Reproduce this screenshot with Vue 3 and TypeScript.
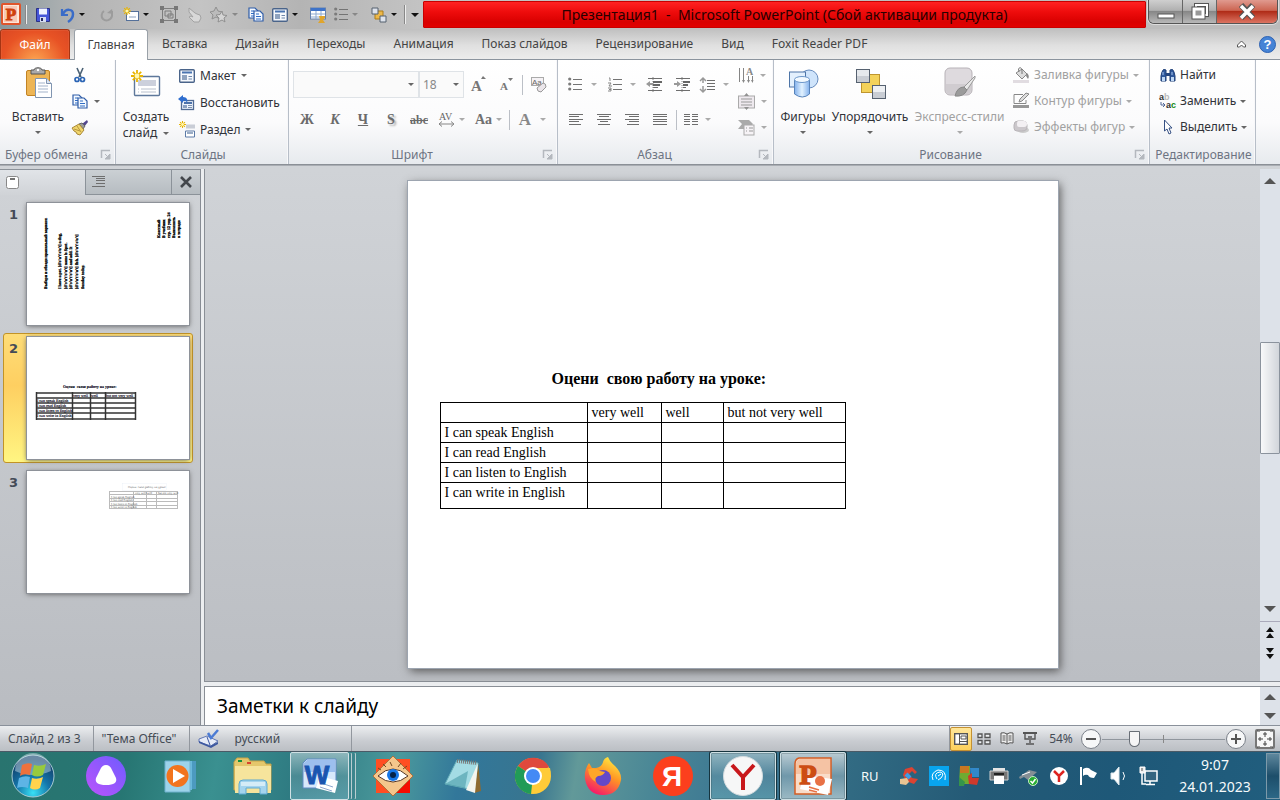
<script setup lang="ts">
import { h, ref, type FunctionalComponent } from 'vue'

interface Glyph { w: number; h: number; body: string }
interface ToolItem { icon: string; label: string; size?: string; menu?: boolean; off?: boolean }

const sheet = '<path d="M1 1h6l3 3v7H1z" fill="#f4f9ff" stroke="#2f5da8" stroke-width="1.200"/><path d="M3 4h3M3 6.500h5M3 9h5" stroke="#2f6cc4"/>'
const lines = (rows: number[][]) => rows.map(([x1, x2, y]) => `<path d="M${x1} ${y}.5H${x2}" stroke="#6e6e6e"/>`).join('')
const burst = '<path d="M5 0v10M0 5h10M1.500 1.500l7 7M8.500 1.500l-7 7" stroke="#e8b400" stroke-width="1.500"/><circle cx="5" cy="5" r="2" fill="#fff8b0"/>'

const icons: Record<string, Glyph> = {
  ppt: { w: 20, h: 22, body: '<rect x="1" y="1" width="18" height="20" rx="1" fill="#fde6da" stroke="#e0552c" stroke-width="2"/><rect x="3" y="3" width="13" height="16" fill="#f9c9b5"/><text x="10" y="17" text-anchor="middle" font-family="Liberation Serif, serif" font-weight="bold" font-size="17" fill="#d0400c" stroke="#d0400c">P</text>' },
  save: { w: 16, h: 16, body: '<path d="M1.500 1.500h13v13h-13z" fill="#4556d8" stroke="#2a3288"/><path d="M4 1.500h8v6H4z" fill="#eef3ff"/><path d="M5 10h6v5H5z" fill="#d5dcf2"/><path d="M6 11h2v3H6z" fill="#252a60"/>' },
  undo: { w: 14, h: 16, body: '<path d="M1 2v6h6" fill="none" stroke="#3a6cc8" stroke-width="2.200"/><path d="M2 7c3-6 10-5 10 0 0 3-2 6-5 8" fill="none" stroke="#3a6cc8" stroke-width="2.500"/>' },
  redo: { w: 14, h: 14, body: '<path d="M4 3C1 5 1 9 3 11c3 3 8 1 9-3V3" fill="none" stroke="#9c9c9c" stroke-width="2"/><path d="M7 5l5-4 1 5z" fill="#9c9c9c"/>' },
  newSmall: { w: 16, h: 15, body: `<rect x="3.500" y="4.500" width="12" height="9" fill="#fff" stroke="#54709a"/><path d="M6 10h7" stroke="#8aa0bd"/><g transform="scale(.8)">${burst}</g>` },
  group: { w: 18, h: 17, body: '<path d="M2.500 2.500h13v12h-13zM5 5h6v5H5zM8 8h5v4H8z" fill="none" stroke="#7d7d7d"/><path d="M0 0h4v4H0zM14 0h4v4h-4zM0 13h4v4H0zM14 13h4v4h-4z" fill="#777"/>' },
  hand: { w: 14, h: 16, body: '<path d="M2 1l6 5 2 1 3 1 1 3-2 4H7l-5-5 2-1 2 1L2 5z" fill="#d8d8d8" stroke="#a2a2a2"/>' },
  star: { w: 18, h: 17, body: '<path d="M6 1l2 4 4 1-3 3 1 4-4-2-4 2 1-4-3-3 4-1z" fill="#bbb" stroke="#909090"/><path d="M12 5l1 4 4 .5-3 2.500 1 4-3-2-4 2 1-4-3-3 4-.5z" fill="#d5d5d5" stroke="#909090"/>' },
  copy: { w: 16, h: 15, body: `${sheet}<g transform="translate(5 3)">${sheet}</g>` },
  layout: { w: 16, h: 14, body: '<rect x=".7" y=".7" width="14.600" height="12.600" rx="1" fill="#f6f9fd" stroke="#4a648a" stroke-width="1.400"/><path d="M3 3.500h10" stroke="#4a74b0" stroke-width="2"/><path d="M3 6h5v5H3z" fill="#8fa3bf"/><path d="M9.500 7.500H13M9.500 10H13" stroke="#6d86aa"/>' },
  grid: { w: 16, h: 16, body: '<rect x=".5" y="1" width="15" height="11" fill="#fff" stroke="#6581ad"/><path d="M1 1h14v3H1z" fill="#3e73c9"/><path d="M1 7h14M1 10h14M6 4v8M11 4v8" stroke="#8da9d0"/><path d="M9 9h6v2l-2 2 2 3H8l2-3z" fill="#e0a52c"/>' },
  bullets: { w: 14, h: 15, body: '<circle cx="1.700" cy="2" r="1.600" fill="#7b7b7b"/><circle cx="1.700" cy="7" r="1.600" fill="#7b7b7b"/><circle cx="1.700" cy="12" r="1.600" fill="#7b7b7b"/><path d="M5 2.500h9M5 7.500h9M5 12.500h9" stroke="#747474"/>' },
  numbers: { w: 15, h: 16, body: '<path d="M1 1h1v3M0 6h3l-2 3h3M0 11h3v3H0M1 12.500h2" fill="none" stroke="#858585"/><path d="M5 2.500h9M5 7.500h9M5 12.500h9" stroke="#747474"/>' },
  arrangeSmall: { w: 16, h: 16, body: '<path d="M4 4h8v8H4z" fill="#edb848" stroke="#ad7c18"/><path d="M1 1h6v6H1zM9 9h6v6H9z" fill="#dee3ec" stroke="#55606f"/>' },
  paste: { w: 29, h: 32, body: '<rect x="2.500" y="3.500" width="23" height="25" rx="1.500" fill="#edb555" stroke="#c28324"/><path d="M7 3h3c0-3 8-3 8 0h3v4H7z" fill="#aaa" stroke="#555"/><circle cx="14" cy="3" r="1.200" fill="#fff"/><path d="M11.500 11.500h11l5 5v14h-16z" fill="#fff" stroke="#8095b1"/><path d="M22.500 11.500v5h5" fill="#dce5f3" stroke="#8095b1"/><path d="M14 16h7M14 19h10M14 22h10M14 25h10" stroke="#a3b3ca"/>' },
  cut: { w: 12, h: 15, body: '<path d="M3 0l4 9M9 0L5 9" stroke="#4a6074" stroke-width="1.600"/><circle cx="3" cy="11.500" r="2" fill="none" stroke="#2c65b5" stroke-width="1.700"/><circle cx="8.500" cy="11.500" r="2" fill="none" stroke="#2c65b5" stroke-width="1.700"/>' },
  brush: { w: 16, h: 15, body: '<path d="M15 0l-5 4 2 3 4-5z" fill="#53478d"/><path d="M7 4l3-1 3 3-2 3z" fill="#999" stroke="#666"/><path d="M0 8l7-4 5 6-4 5-3-1-1-2-2-1z" fill="#f0d56c" stroke="#a98735"/><path d="M2 9l6 2M5 6l4 6" stroke="#b7963e"/>' },
  newSlide: { w: 32, h: 30, body: `<rect x="4.500" y="8.500" width="25" height="19" rx="1" fill="#fff" stroke="#5e789b" stroke-width="1.400"/><path d="M8 12h18v6H8z" fill="#ccd0dc"/><path d="M8 21h1M11 21h15M8 24h1M11 24h15" stroke="#b8c0cd"/><g transform="translate(1 2) scale(1.200)">${burst}</g>` },
  reset: { w: 17, h: 16, body: '<rect x="3.500" y="5.500" width="12" height="9" fill="#eef4fc" stroke="#516b94" stroke-width="1.300"/><path d="M6 8h8" stroke="#4d72aa" stroke-width="2"/><path d="M5 10h4v3H5z" fill="#8ba1c2"/><path d="M10 10.500h4M10 12.500h4" stroke="#7d91ae"/><path d="M0 4l5-4v2c4 0 5 3 4 6-1-3-2-3-4-2v2z" fill="#2f6ecf"/>' },
  section: { w: 16, h: 17, body: `<path d="M7 3.500h9v4H7z" fill="#c9cdd6"/><path d="M6.500 10h9v6h-9z" fill="#fff" stroke="#5c7ba7"/><path d="M8 12h6" stroke="#9aacc5" stroke-width="2"/><g transform="scale(.7)">${burst}</g>` },
  bigA: { w: 15, h: 17, body: '<text x="0" y="15" font-family="Liberation Serif, serif" font-weight="bold" font-size="15" fill="#777">A</text><path d="M10 3l2-3 3 3z" fill="#777"/>' },
  smallA: { w: 13, h: 16, body: '<text x="0" y="13" font-family="Liberation Serif, serif" font-weight="bold" font-size="11" fill="#777">A</text><path d="M8 1h5l-2.500 3z" fill="#777"/>' },
  clear: { w: 17, h: 17, body: '<rect x=".5" y="1.500" width="12" height="8" fill="#f5f2f5" stroke="#aaa"/><text x="1" y="9" font-family="Liberation Sans, sans-serif" font-size="8" fill="#666">Aa</text><path d="M6 12l6-5q3 0 3 4l-5 5q-4 0-4-4z" fill="#ebe6eb" stroke="#999"/>' },
  spacingAV: { w: 17, h: 15, body: '<text x="1" y="8" font-family="Liberation Serif, serif" font-size="10" fill="#666">AV</text><path d="M1 12h14M4 9.500L1 12l3 2.500M13 9.500l3 2.500-3 2.500" fill="none" stroke="#858585"/>' },
  outdent: { w: 17, h: 15, body: `${lines([[2, 16, 1], [7, 16, 4], [7, 14, 7], [7, 12, 10], [2, 16, 13]])}<path d="M7 0v15" stroke="#888" stroke-dasharray="1 1"/><path d="M0 7l4-3v2h3v2H4v2z" fill="#999"/><path d="M7 5h9M7 8h7" stroke="#666" stroke-width="2"/>` },
  indent: { w: 17, h: 15, body: `${lines([[2, 16, 1], [9, 16, 4], [9, 14, 7], [9, 12, 10], [2, 16, 13]])}<path d="M8 0v15" stroke="#888" stroke-dasharray="1 1"/><path d="M7 7L3 4v2H0v2h3v2z" fill="#999"/><path d="M9 5h7M9 8h5" stroke="#666" stroke-width="2"/>` },
  lineGap: { w: 16, h: 16, body: `${lines([[7, 15, 3], [7, 15, 6], [7, 15, 9], [7, 15, 12]])}<path d="M3 1v5M3 9v6M0 4l3-3 3 3M0 12l3 3 3-3" fill="none" stroke="#999" stroke-width="1.500"/>` },
  left: { w: 14, h: 12, body: lines([[0, 14, 0], [0, 10, 2], [0, 14, 5], [0, 10, 7], [0, 12, 10]]) },
  center: { w: 14, h: 12, body: lines([[0, 14, 0], [2, 12, 2], [0, 14, 5], [3, 11, 7], [1, 13, 10]]) },
  right: { w: 14, h: 12, body: lines([[0, 14, 0], [4, 14, 2], [0, 14, 5], [4, 14, 7], [2, 14, 10]]) },
  justify: { w: 14, h: 12, body: lines([[0, 14, 0], [0, 14, 2], [0, 14, 5], [0, 14, 7], [0, 14, 10]]) },
  columns: { w: 14, h: 12, body: lines([[0, 6, 0], [0, 6, 2], [0, 6, 5], [0, 6, 7], [0, 6, 10], [8, 14, 0], [8, 14, 2], [8, 14, 5], [8, 14, 7], [8, 14, 10]]) },
  direction: { w: 16, h: 17, body: '<path d="M1.500 1v14M5.500 1v14M10.500 9v6M14.500 9v6" stroke="#858585"/><path d="M4 13l1.500 3L7 13M9 13l1.500 3 1.500-3M13 13l1.500 3 1-3" fill="#888"/><text x="8" y="8" font-family="Liberation Serif, serif" font-size="10" font-weight="bold" fill="#888">A</text>' },
  valign: { w: 17, h: 17, body: '<rect x=".5" y="3" width="16" height="12" fill="#eee9ee" stroke="#aaa"/><path d="M3 6h11M3 9h11M3 12h11" stroke="#999"/><path d="M6 3l2.500-3L11 3zM6 14l2.500 3 2.500-3z" fill="#929292"/>' },
  smart: { w: 17, h: 16, body: '<path d="M0 1h11l4 4-4 5H0l4-5z" fill="#aaa"/><rect x="6" y="6" width="10" height="10" fill="#f6f3f6" stroke="#aaa"/><path d="M8 9h1M11 9h4M8 12h1M11 12h4" stroke="#999"/>' },
  shapes: { w: 31, h: 30, body: '<defs><linearGradient id="cyl"><stop stop-color="#83b1ec"/><stop offset=".5" stop-color="#e2f2ff"/><stop offset="1" stop-color="#83b1ec"/></linearGradient></defs><circle cx="21" cy="11" r="9" fill="#cfe4fb" stroke="#668bbd"/><rect x="1.500" y="4" width="16" height="15" fill="#e3f0fd" stroke="#4e75a7"/><path d="M6.500 12v14q8 6 15 0V12" fill="url(#cyl)" stroke="#5884bb"/><ellipse cx="14" cy="11.500" rx="7.500" ry="3" fill="#f2f9ff" stroke="#6b96c9"/>' },
  arrange: { w: 31, h: 31, body: '<rect x="6.500" y="6.500" width="18" height="18" fill="#f4d25a" stroke="#bf952e"/><rect x="1.500" y="1.500" width="13" height="13" fill="#c9cdd4" stroke="#566170"/><path d="M2 2h12v6H2z" fill="#e6e9ed"/><rect x="17.500" y="17.500" width="13" height="13" fill="#c9cdd4" stroke="#566170"/><path d="M18 18h12v6H18z" fill="#eef0f3"/>' },
  express: { w: 32, h: 32, body: '<rect x="1" y="1" width="27" height="27" rx="5" fill="#dedade" stroke="#b7b2b7"/><path d="M2 17h25v6q0 4-4 4H6q-4 0-4-4z" fill="#d0ccd0"/><path d="M31 9L20 20l3 3 8-12z" fill="#e8e8e8" stroke="#999"/><path d="M20 20q-7 0-9 9 9 1 12-6z" fill="#9b9b9b" stroke="#888"/>' },
  fill: { w: 17, h: 17, body: '<path d="M3 6l6-4 5 5-5 5z" fill="#ddd" stroke="#888"/><path d="M6 5c-2-5 3-6 3-1v3" fill="none" stroke="#777"/><path d="M14 6q3 3 1 6l-2-3z" fill="#888"/><path d="M0 13h16v3H0z" fill="#e1dce1"/>' },
  outline: { w: 17, h: 16, body: '<path d="M10 1.500H1v9h12V7" fill="none" stroke="#888"/><path d="M6 9l1-3 6-6 3 1-7 7z" fill="#ddd" stroke="#888"/><path d="M0 12h16v3H0z" fill="#979797"/>' },
  effects: { w: 17, h: 15, body: '<ellipse cx="10" cy="10" rx="6" ry="3" fill="#ccc"/><path d="M1 5q0-4 4-4h5q4 0 4 4v2q0 4-5 4H4q-3 0-3-3z" fill="#cbc7cb" stroke="#b8b4b8"/><path d="M5 1h6q3 0 3 3 0 3-3 3H6q-2 0-2-2 0-4 1-4z" fill="#f3f0f3"/>' },
  find: { w: 16, h: 15, body: '<path d="M2 4q1-4 4-2v11H1V8zM14 4q-1-4-4-2v11h5V8z" fill="#305a9e" stroke="#1e3e76"/><path d="M6 5h4v3H6z" fill="#24457e"/><path d="M2 9h3v4H2zM11 9h3v4h-3z" fill="#bfd8f5"/><path d="M3 4v3M12 4v3" stroke="#a6c4ed"/>' },
  replace: { w: 17, h: 16, body: '<text x="0" y="7" font-family="Liberation Sans, sans-serif" font-size="9" font-weight="bold" fill="#333">a<tspan fill="#bbb">b</tspan></text><path d="M2 9v3h3M4 10l2 2-2 2" fill="none" stroke="#526898"/><text x="7" y="15" font-family="Liberation Sans, sans-serif" font-size="9" font-weight="bold" fill="#333">a<tspan fill="#168a16">c</tspan></text>' },
  select: { w: 11, h: 16, body: '<path d="M2.500 1v11l2.500-2 2 5 2-1-2-5h3z" fill="#fff" stroke="#355083"/>' },
  launcher: { w: 10, h: 10, body: '<path d="M.5 8V.5H9" fill="none" stroke="#b4b8be" stroke-width="1.500"/><path d="M4 4l3 3M9 4v5H4z" fill="#b4b8be" stroke="#b4b8be"/>' },
  slideTab: { w: 13, h: 13, body: '<rect x=".5" y=".5" width="12" height="12" rx="2" fill="#fff" stroke="#888"/><path d="M4 3h5" stroke="#444" stroke-width="1.500"/>' },
  outlineTab: { w: 14, h: 12, body: lines([[0, 13, 0], [4, 13, 2], [4, 13, 4], [4, 13, 7], [0, 13, 10]]) },
  close: { w: 12, h: 12, body: '<path d="M1 1l10 10M11 1L1 11" stroke="#43474c" stroke-width="2.600"/>' },
  spelling: { w: 22, h: 19, body: '<path d="M1 10l8-3 11 5-7 5-12-4z" fill="#e6ebf7" stroke="#6077b4"/><path d="M1 12l11 5 8-4v2l-7 4-12-5z" fill="#3d58a0"/><path d="M9 8l3 8" stroke="#3d58a0"/><path d="M10 4l3 5L20 1" fill="none" stroke="#4b7bd4" stroke-width="2.500"/>' },
  normal: { w: 14, h: 12, body: '<rect x=".7" y=".7" width="12.600" height="10.600" fill="#fff" stroke="#555" stroke-width="1.400"/><path d="M5.500 1v10M7 3h5v3H7zM6 8.500h7" fill="none" stroke="#555"/>' },
  sorter: { w: 14, h: 12, body: '<path d="M1 1h4v3.500H1zM8 1h5v3.500H8zM1 7.500h4V11H1zM8 7.500h5V11H8z" fill="#eef0f2" stroke="#555" stroke-width="1.300"/>' },
  reading: { w: 14, h: 13, body: '<path d="M7 2Q4 0 1 1v10q3-1 6 1 3-2 6-1V1Q10 0 7 2v10" fill="#eee" stroke="#555"/><path d="M2.500 4h3M2.500 6h3M2.500 8h3M8.500 4h3M8.500 6h3M8.500 8h3" stroke="#555"/>' },
  show: { w: 14, h: 13, body: '<path d="M0 1h14" stroke="#555" stroke-width="2"/><path d="M2 2v5h10V2M7 8v3M3 12h8M5 5h4" fill="none" stroke="#555" stroke-width="1.400"/>' },
  fit: { w: 20, h: 20, body: '<rect x="1" y="1" width="18" height="18" rx="1" fill="#f7f7f7" stroke="#777" stroke-width="2"/><path d="M10 3v5M8 5h4M10 12v5M8 15h4M3 10h5M5 8v4M12 10h5M15 8v4" fill="none" stroke="#444"/><path d="M2 2h2v2M18 2h-2v2M2 18h2v-2M18 18h-2v-2" stroke="#444" stroke-dasharray="1 1"/>' },
  windows: { w: 44, h: 44, body: '<defs><radialGradient id="orb" cx=".5" cy=".9" r=".8"><stop stop-color="#38e0f5"/><stop offset=".5" stop-color="#1475a9"/><stop offset="1" stop-color="#123d68"/></radialGradient></defs><circle cx="22" cy="22" r="21" fill="url(#orb)" stroke="#a6c9d2"/><path d="M4 17a18 18 0 0 1 36 0q-18 8-36 0" fill="#d7e9f0" opacity=".45"/><path d="M11 11q6-3 10-1l-2 11q-6-2-10 1z" fill="#ee713c"/><path d="M23 11q6 2 12-1l-3 11q-6 3-11 0z" fill="#98ca3d"/><path d="M8 24q6-3 11-1l-2 11q-6-2-11 0z" fill="#5eb4e5"/><path d="M21 24q5 2 11-1l-3 11q-5 3-10 0z" fill="#ffd34d"/>' },
  alice: { w: 40, h: 40, body: '<defs><linearGradient id="al" x1="1" y1="0" x2="0" y2="1"><stop stop-color="#6e5cff"/><stop offset="1" stop-color="#bc53fb"/></linearGradient></defs><circle cx="20" cy="20" r="20" fill="url(#al)"/><path d="M20 9q4 0 6 5l4 8q2 7-10 7t-10-7l4-8q2-5 6-5z" fill="#fff"/>' },
  media: { w: 34, h: 34, body: '<path d="M9 2h23v28H9z" fill="#4c9ac0"/><path d="M5 2h23v29H5z" fill="#69b8dc"/><path d="M1 2h25v31H1z" fill="#9dd3ea" stroke="#70b2cf"/><circle cx="13.500" cy="17" r="11" fill="#f2741e"/><path d="M9 10l12 7-12 7z" fill="#fff"/>' },
  explorer: { w: 40, h: 38, body: '<path d="M1 5l3-4h11l2 3h14l2 3h5v26H1z" fill="#e4c76b" stroke="#c5a246"/><path d="M5 3h4v2H5z" fill="#16913b"/><path d="M14 5h4v2h-4z" fill="#d9442e"/><path d="M2 9h36v27H2z" fill="#f6e49c"/><path d="M6 37V27q0-4 4-4h20q4 0 4 4v10h-7v-6H13v6z" fill="#a4d4ee" stroke="#5ea9d1"/><path d="M8 25h24v4H8z" fill="#d5ecf7"/>' },
  word: { w: 36, h: 36, body: '<path d="M5 1h29v29H1V5z" fill="#d7e8fb" stroke="#5e8ac4"/><path d="M5 2h28v12H2V5z" fill="#9dbfee"/><path d="M18 18l18 5-3 12-19-5z" fill="#fff"/><path d="M19 25l12 4M18 29l12 4" stroke="#8ca6cf"/><text x="15" y="26" text-anchor="middle" font-family="Liberation Sans, sans-serif" font-weight="bold" font-size="26" fill="#1a55b0" stroke="#1a55b0">W</text>' },
  eye: { w: 40, h: 40, body: '<path d="M3 3h34v34H3z" fill="#ff4e22"/><path d="M20 20h17v17H20z" fill="#f60c00"/><path d="M20 0l20 20-20 20L0 20z" fill="#f4c68c" stroke="#ae713b"/><path d="M5 20q15-14 30 0-15 12-30 0z" fill="#fff" stroke="#553520"/><circle cx="20" cy="19" r="6" fill="#1677e8"/><circle cx="20" cy="19" r="3" fill="#052348"/><path d="M8 14l-3-2M13 11l-3-3M19 10l-2-4M25 11l3-4M30 13l4-3" stroke="#754820"/>' },
  notepad: { w: 38, h: 36, body: '<path d="M34 4l3 29-7 2z" fill="#8e6a30"/><path d="M13 2l21 3-4 27-29-6z" fill="#a4dce4" stroke="#65aeb9"/><path d="M34 5l-3 30-9-3z" fill="#f5f5ee"/><path d="M13 3l20 2" stroke="#777" stroke-width="4" stroke-dasharray="1 1"/><path d="M1 26L24 13l-3 17z" fill="#358d9b" opacity=".5"/>' },
  chrome: { w: 38, h: 38, body: '<circle cx="19" cy="19" r="18" fill="#ffcb38"/><path d="M19 19L4 9a18 18 0 0 1 31 1z" fill="#df493d"/><path d="M19 19L4 9a18 18 0 0 0 13 28z" fill="#219b57"/><path d="M19 11h17q3 13-8 22l-9-10z" fill="#ffcb38"/><circle cx="19" cy="19" r="9" fill="#fff"/><circle cx="19" cy="19" r="7" fill="#438af5"/>' },
  firefox: { w: 40, h: 40, body: '<defs><linearGradient id="ff" x1=".8" y1="0" x2=".3" y2="1"><stop stop-color="#fff044"/><stop offset=".45" stop-color="#ff9624"/><stop offset="1" stop-color="#f5156c"/></linearGradient></defs><path d="M25 1q2 5 7 9 7 7 6 14-3 15-18 15T2 23Q1 14 6 7l3 5h4q6-1 7-6 1-4 5-5z" fill="url(#ff)"/><circle cx="20" cy="22" r="8" fill="#6548c8"/><path d="M5 13q8-2 12 2l5 1q-2 4-7 4-4 2-2 6-7-3-8-13z" fill="#ffa629"/>' },
  yandex: { w: 40, h: 40, body: '<circle cx="20" cy="20" r="20" fill="#fc3f1d"/><text x="19" y="30" text-anchor="middle" font-family="Liberation Sans, sans-serif" font-weight="bold" font-size="28" fill="#fff">Я</text>' },
  browser: { w: 40, h: 40, body: '<circle cx="20" cy="20" r="19.500" fill="#f6f7f7" stroke="#d4dcdf"/><path d="M9 9l11 12L31 9M20 21v13" fill="none" stroke="#c8181c" stroke-width="4"/>' },
  power: { w: 38, h: 38, body: '<path d="M5 1h32v36H1V7q0-5 4-6z" fill="#f9dcc9" stroke="#d45d25" stroke-width="1.500"/><path d="M6 2h30v15H2V8q0-5 4-6z" fill="#f5c3a4"/><path d="M10 18l28 4-4 16-28-6z" fill="#fff"/><circle cx="26" cy="24" r="5" fill="#e87145"/><path d="M15 30l10 3M15 33l8 2" stroke="#e87145" stroke-width="1.500"/><text x="14" y="27" text-anchor="middle" font-family="Liberation Serif, serif" font-weight="bold" font-size="28" fill="#cd4d13" stroke="#cd4d13" stroke-width="1.500">P</text>' },
  cleaner: { w: 20, h: 20, body: '<path d="M18 6L13 1 6 3 4 9l3 6 8 3 4-5-6-1-3-4 3-3 3 3z" fill="#dc4332"/><path d="M7 8l4 4" stroke="#3d9ce5" stroke-width="4"/><path d="M1 13l7-1 2 4-3 3-6-1z" fill="#e9c493"/>' },
  wifi: { w: 20, h: 20, body: '<path d="M0 0h20v20H0z" fill="#08a4ee"/><path d="M4 14Q1 7 9 4q9 0 7 10M8 13q-4-6 3-7 5 1 1 6l-3 2M9 10l3-2" fill="none" stroke="#fff"/>' },
  blocks: { w: 20, h: 20, body: '<path d="M1 0h10v18H0z" fill="#6fab31"/><path d="M1 0h9v7H1z" fill="#c77722"/><path d="M11 2h9v9h-8z" fill="#3288ca"/><path d="M9 10l4-3v5l7 0-2 7-8-1z" fill="#cf392b"/><path d="M0 11l6 5-1 4H0z" fill="#35944b"/>' },
  printer: { w: 20, h: 18, body: '<path d="M4 1h12v5H4z" fill="#e5e5e5"/><path d="M1 4h18v9H1z" fill="#777" stroke="#d1d1d1"/><path d="M5 9h10v8H5z" fill="#fff"/><path d="M5 7h10" stroke="#222" stroke-width="2"/>' },
  usb: { w: 20, h: 20, body: '<path d="M0 11l10-7 8 2-9 8-4-3-4 2z" fill="#848e95"/><path d="M3 9l8-3" stroke="#fff"/><circle cx="14" cy="15" r="4.500" fill="#27ad32" stroke="#c8eec4"/><path d="M11.500 15l2 2 3-4" fill="none" stroke="#fff" stroke-width="1.500"/>' },
  flag: { w: 20, h: 20, body: '<path d="M2 1v18" stroke="#fff" stroke-width="2"/><path d="M4 3q5-3 8 1l6 3-3 5q-5 0-6-3-3-1-5 1z" fill="#fff"/>' },
  sound: { w: 20, h: 20, body: '<path d="M2 7h3l5-6v18l-5-6H2z" fill="#fff" stroke="#dde8ed"/><path d="M14 6q3 4 0 8" fill="none" stroke="#fff"/>' },
  network: { w: 20, h: 20, body: '<path d="M6 5h12v10H6z" fill="#346580" stroke="#fff" stroke-width="1.500"/><path d="M11 15v3M7 18.500h9M3 7v11h4" fill="none" stroke="#fff" stroke-width="1.500"/><path d="M1 1h5v6H1z" fill="#eee" stroke="#fff"/><path d="M3 2v3" stroke="#555"/>' },
  yTray: { w: 20, h: 20, body: '<circle cx="10" cy="10" r="9" fill="#fff"/><path d="M5 5l5 5 5-5M10 10v6" fill="none" stroke="#dd2420" stroke-width="2.500"/>' },
  help: { w: 17, h: 17, body: '<circle cx="8.500" cy="8.500" r="8" fill="#4583d6" stroke="#2e62b2"/><text x="8.500" y="13" text-anchor="middle" font-family="Liberation Sans, sans-serif" font-weight="bold" font-size="13" fill="#fff">?</text>' },
  collapse: { w: 11, h: 8, body: '<path d="M1.500 5l4-4 4 4v2H7.500l-2-2-2 2h-2z" fill="#fff" stroke="#555"/>' },
  prev: { w: 10, h: 12, body: '<path d="M1 5l4-5 4 5zM1 11l4-5 4 5z" fill="#111"/>' },
  next: { w: 10, h: 12, body: '<path d="M1 1h8L5 6zM1 7h8l-4 5z" fill="#111"/>' },
}

const Icon: FunctionalComponent<{ name: string }> = ({ name }) => {
  const g = icons[name]
  return h('svg', { width: g.w, height: g.h, viewBox: `0 0 ${g.w} ${g.h}`, fill: 'none', 'aria-hidden': 'true', innerHTML: g.body })
}
Icon.props = ['name']

const quick: ToolItem[] = [
  { icon: 'save', label: 'Сохранить' }, { icon: 'undo', label: 'Отменить', menu: true },
  { icon: 'redo', label: 'Вернуть' }, { icon: 'newSmall', label: 'Создать слайд', menu: true },
  { icon: 'group', label: 'Группировать' }, { icon: 'hand', label: 'Действие' },
  { icon: 'star', label: 'Анимация', menu: true, off: true }, { icon: 'copy', label: 'Копировать' },
  { icon: 'layout', label: 'Макет', menu: true }, { icon: 'grid', label: 'Таблица' },
  { icon: 'bullets', label: 'Маркеры', menu: true, off: true }, { icon: 'arrangeSmall', label: 'Упорядочить', menu: true },
]
const tabs = ['Вставка', 'Дизайн', 'Переходы', 'Анимация', 'Показ слайдов', 'Рецензирование', 'Вид', 'Foxit Reader PDF']
const listTools: ToolItem[] = [
  { icon: 'bullets', label: 'Маркеры', menu: true, size: 'w41' }, { icon: 'numbers', label: 'Нумерация', menu: true, size: 'w38' },
  { icon: 'outdent', label: 'Уменьшить уровень', size: 'w28' }, { icon: 'indent', label: 'Увеличить уровень', size: 'w28' },
  { icon: 'lineGap', label: 'Интервал', menu: true, size: 'w38' },
]
const alignTools = ['left', 'center', 'right', 'justify']
const textTools = ['direction', 'valign', 'smart']
const slideTools: ToolItem[] = [
  { icon: 'layout', label: 'Макет', menu: true }, { icon: 'reset', label: 'Восстановить' }, { icon: 'section', label: 'Раздел', menu: true },
]
const shapeTools: ToolItem[] = [
  { icon: 'fill', label: 'Заливка фигуры', menu: true }, { icon: 'outline', label: 'Контур фигуры', menu: true }, { icon: 'effects', label: 'Эффекты фигур', menu: true },
]
const editTools: ToolItem[] = [
  { icon: 'find', label: 'Найти' }, { icon: 'replace', label: 'Заменить', menu: true }, { icon: 'select', label: 'Выделить', menu: true },
]
const heading = 'Оцени\u00a0 свою работу на уроке:'
const levels = ['very well', 'well', 'but not very well']
const skills = ['I can speak English', 'I can read English', 'I can listen to English', 'I can write in English']
const columnEdges = [37, 73, 91, 106, 136].map((x) => x - 28)
const rowEdges = [56, 61, 66, 71, 76, 82]
const verse = [
  { x: 20, text: 'Выбери и обведи правильный вариант.' },
  { x: 34, text: "I have a pet. [d'o'u't'o'u't] a dog," },
  { x: 40, text: "[d'o'u't'o'u't] name is Spot." },
  { x: 45, text: "[d'o'u't'o'u't] and add. It" },
  { x: 51, text: "[d'o'u't'o'u't] fish. [d'o'u't'o'u't]" },
  { x: 57, text: 'Sunday today.' },
]
const sideVerse = ['Классный', 'В учебник', 'стр. 12 упр. 24', 'Выполнить', 'в тетради']
const views = ['normal', 'sorter', 'reading', 'show']
const pinned = ['alice', 'media', 'explorer']
const apps = ['word', 'eye', 'notepad', 'chrome', 'firefox', 'yandex', 'browser', 'power']
const tray = ['cleaner', 'wifi', 'blocks', 'printer', 'usb', 'yTray', 'flag', 'sound', 'network']
const active = ref(2)
const zoom = ref(24)
</script>

<template>
  <div class="screen">
    <header class="titlebar">
      <Icon name="ppt" class="logo" />
      <span class="bar"></span>
      <div class="quick">
        <button v-for="q in quick" :key="q.label" :class="{ menu: q.menu }" :aria-label="q.label">
          <Icon :name="q.icon" /><i v-if="q.menu" class="caret" :class="{ dim: q.off, dark: !q.off }"></i>
        </button>
      </div>
      <span class="bar"></span>
      <button class="more" aria-label="Настройка панели"><i class="caret dark"></i></button>
      <h1>Презентация1&nbsp; -&nbsp; Microsoft PowerPoint (Сбой активации продукта)</h1>
      <div class="window">
        <button aria-label="Свернуть"><svg width="18" height="14"><rect x="1" y="9" width="16" height="4" fill="#fff" stroke="#555" /></svg></button>
        <button aria-label="Восстановить окно"><svg width="19" height="18" fill="none"><path d="M6 2h11v10H6z" stroke="#555" stroke-width="4" /><path d="M6 2h11v10H6z" stroke="#fff" stroke-width="2" /><path d="M4 6h9v8H4z" stroke="#555" stroke-width="5" /><path d="M4 6h9v8H4z" fill="#999" stroke="#fff" stroke-width="3" /></svg></button>
        <button class="shut" aria-label="Закрыть"><svg width="18" height="16"><path d="M3 1l12 13M15 1L3 14" stroke="#555" stroke-width="6" /><path d="M3 2l12 12M15 2L3 14" stroke="#fff" stroke-width="3.500" /></svg></button>
      </div>
    </header>

    <nav class="tabs">
      <button class="file">Файл</button>
      <button class="current">Главная</button>
      <button v-for="t in tabs" :key="t">{{ t }}</button>
      <span class="help"><button aria-label="Свернуть ленту"><Icon name="collapse" /></button><button aria-label="Справка"><Icon name="help" /></button></span>
    </nav>

    <section class="ribbon">
      <div class="group clip">
        <div class="body">
          <button class="big"><span class="pic"><Icon name="paste" /></span>Вставить<i class="caret"></i></button>
          <div class="stack">
            <button aria-label="Вырезать"><Icon name="cut" /></button>
            <button aria-label="Копировать"><Icon name="copy" /><i class="caret"></i></button>
            <button aria-label="Формат по образцу"><Icon name="brush" /></button>
          </div>
        </div>
        <footer><span>Буфер обмена</span><button aria-label="Параметры буфера"><Icon name="launcher" /></button></footer>
      </div>

      <div class="group slides">
        <div class="body">
          <button class="big"><span class="pic"><Icon name="newSlide" /></span>Создать<span class="inline">слайд<i class="caret"></i></span></button>
          <div class="stack">
            <button v-for="s in slideTools" :key="s.label"><span class="ico"><Icon :name="s.icon" /></span>{{ s.label }}<i v-if="s.menu" class="caret"></i></button>
          </div>
        </div>
        <footer class="plain"><span>Слайды</span></footer>
      </div>

      <div class="group font">
        <div class="body rows">
          <div class="row">
            <label class="combo face"><select aria-label="Шрифт" disabled><option></option></select><i class="caret"></i></label>
            <label class="combo points"><select aria-label="Размер шрифта" disabled><option>18</option></select><i class="caret"></i></label>
            <button class="w28" aria-label="Увеличить размер"><Icon name="bigA" /></button>
            <button class="w28" aria-label="Уменьшить размер"><Icon name="smallA" /></button>
            <span class="rule"></span>
            <button class="w28" aria-label="Очистить формат"><Icon name="clear" /></button>
          </div>
          <div class="row letters">
            <button class="w28"><b>Ж</b></button><button class="w28"><b><em>К</em></b></button><button class="w28"><b><u>Ч</u></b></button>
            <button class="w28 shade"><b>S</b></button><button class="w28"><s>abc</s></button>
            <button class="w38 off" aria-label="Межзнаковый интервал"><Icon name="spacingAV" /><i class="caret"></i></button>
            <button class="w38 off"><b>Aa</b><i class="caret"></i></button>
            <span class="rule"></span>
            <button class="w41 off"><b class="tint">A</b><i class="caret"></i></button>
          </div>
        </div>
        <footer><span>Шрифт</span><button aria-label="Параметры шрифта"><Icon name="launcher" /></button></footer>
      </div>

      <div class="group para">
        <div class="body">
          <div class="rows">
            <div class="row">
              <button v-for="l in listTools" :key="l.label" :class="[l.size, 'off']" :aria-label="l.label"><Icon :name="l.icon" /><i v-if="l.menu" class="caret"></i></button>
            </div>
            <div class="row">
              <button v-for="a in alignTools" :key="a" class="w28" :aria-label="a"><Icon :name="a" /></button>
              <span class="rule"></span>
              <button class="w38 off" aria-label="Колонки"><Icon name="columns" /><i class="caret"></i></button>
            </div>
          </div>
          <div class="stack">
            <button v-for="t in textTools" :key="t" class="off" :aria-label="t"><Icon :name="t" /><i class="caret"></i></button>
          </div>
        </div>
        <footer><span>Абзац</span><button aria-label="Параметры абзаца"><Icon name="launcher" /></button></footer>
      </div>

      <div class="group draw">
        <div class="body">
          <button class="big"><span class="pic"><Icon name="shapes" /></span>Фигуры<i class="caret"></i></button>
          <button class="big"><span class="pic"><Icon name="arrange" /></span>Упорядочить<i class="caret"></i></button>
          <button class="big off"><span class="pic"><Icon name="express" /></span>Экспресс-стили<i class="caret"></i></button>
          <div class="stack off">
            <button v-for="s in shapeTools" :key="s.label" class="off"><span class="ico"><Icon :name="s.icon" /></span>{{ s.label }}<i class="caret"></i></button>
          </div>
        </div>
        <footer><span>Рисование</span><button aria-label="Параметры рисования"><Icon name="launcher" /></button></footer>
      </div>

      <div class="group edit">
        <div class="body">
          <div class="stack">
            <button v-for="s in editTools" :key="s.label"><span class="ico"><Icon :name="s.icon" /></span>{{ s.label }}<i v-if="s.menu" class="caret"></i></button>
          </div>
        </div>
        <footer class="plain"><span>Редактирование</span></footer>
      </div>
    </section>

    <main>
      <aside>
        <div class="panes">
          <button class="on" aria-label="Слайды"><Icon name="slideTab" /></button>
          <button aria-label="Структура"><Icon name="outlineTab" /></button>
          <button aria-label="Закрыть область"><Icon name="close" /></button>
        </div>
        <ol>
          <li v-for="n in 3" :key="n" :class="{ selected: n === active }" @click="active = n">
            <strong>{{ n }}</strong>
            <svg class="thumb" viewBox="0 0 162 122">
              <g v-if="n === 1" class="verse">
                <text v-for="v in verse" :key="v.x" :transform="`translate(${v.x} 86) rotate(-90)`">{{ v.text }}</text>
                <text v-for="(v, i) in sideVerse" :key="v" :transform="`translate(${133 + i * 5} 35) rotate(-90)`">{{ v }}</text>
              </g>
              <g v-else-if="n === 2" class="mini">
                <text x="36" y="51" class="mini-head">{{ heading }}</text>
                <path v-for="x in columnEdges" :key="x" :d="`M${x}.5 55V83`" />
                <path v-for="y in rowEdges" :key="y" :d="`M9 ${y}H109`" />
                <text v-for="(l, i) in levels" :key="l" :x="columnEdges[i + 1] + 1" y="60">{{ l }}</text>
                <text v-for="(s, i) in skills" :key="s" x="10" :y="65 + i * 5">{{ s }}</text>
              </g>
              <g v-else class="mini faint">
                <rect x="95.500" y="12.500" width="44" height="7" fill="none" stroke="#a9c4dc" />
                <text x="101" y="17">{{ heading }}</text>
                <path d="M82.500 20V38M106.500 20V38M119.500 20V38M129.500 20V38M150.500 20V38M82 20.500H151M82 23.500H151M82 27.500H151M82 30.500H151M82 34.500H151M82 37.500H151" />
                <text x="108" y="23">very well</text><text x="120" y="23">well</text><text x="131" y="23">but not very well</text>
                <text v-for="(s, i) in skills" :key="s" x="84" :y="27 + Math.round(i * 3.4)">{{ s }}</text>
              </g>
            </svg>
          </li>
        </ol>
      </aside>

      <div class="work">
        <div class="canvas">
          <article class="slide">
            <h2>{{ heading }}</h2>
            <table>
              <thead><tr><th></th><th v-for="l in levels" :key="l">{{ l }}</th></tr></thead>
              <tbody><tr v-for="s in skills" :key="s"><td>{{ s }}</td><td v-for="l in levels" :key="l"></td></tr></tbody>
            </table>
          </article>
          <div class="scroll">
            <button class="up" aria-label="Вверх"></button>
            <div class="track"><div class="thumbbar"></div></div>
            <button class="down" aria-label="Вниз"></button>
            <button class="jump first" aria-label="Предыдущий слайд"><Icon name="prev" /></button>
            <button class="jump" aria-label="Следующий слайд"><Icon name="next" /></button>
          </div>
        </div>
        <div class="notes">
          <p>Заметки к слайду</p>
          <div class="scroll"><button class="up" aria-label="Заметки вверх"></button><button class="down" aria-label="Заметки вниз"></button></div>
        </div>
      </div>
    </main>

    <div class="status">
      <span>Слайд 2 из 3</span><span>"Тема Office"</span>
      <span class="lang"><Icon name="spelling" />русский</span>
      <div class="viewer">
        <button v-for="(v, i) in views" :key="v" :class="{ on: i === 0 }" :aria-label="v"><Icon :name="v" /></button>
        <output>54%</output>
        <button class="round" aria-label="Уменьшить"><svg width="10" height="10"><path d="M0 5h10" stroke="#555" stroke-width="2" /></svg></button>
        <input v-model="zoom" type="range" min="0" max="100" aria-label="Масштаб" />
        <button class="round" aria-label="Увеличить"><svg width="10" height="10"><path d="M0 5h10M5 0v10" stroke="#555" stroke-width="2" /></svg></button>
        <button aria-label="Вписать"><Icon name="fit" /></button>
      </div>
    </div>

    <footer class="taskbar">
      <button class="start" aria-label="Пуск"><Icon name="windows" /></button>
      <button v-for="p in pinned" :key="p" :aria-label="p" :class="p"><Icon :name="p" /></button>
      <button v-for="a in apps" :key="a" :aria-label="a" :class="[a, { open: a === 'word' || a === 'browser' || a === 'power' }]"><Icon :name="a" /></button>
      <div class="tray">
        <span class="locale">RU</span>
        <button v-for="t in tray" :key="t" :aria-label="t"><Icon :name="t" /></button>
        <time>9:07<br />24.01.2023</time>
        <button class="desktop" aria-label="Показать рабочий стол"></button>
      </div>
    </footer>
  </div>
</template>

<style>
body { margin: 0; }
</style>

<style scoped>
* { box-sizing: border-box; }
.screen { display: flex; flex-direction: column; min-height: 100vh; overflow: hidden; font: 12px/16px "Noto Sans", "Open Sans", sans-serif; color: #303238; background: #c5c9cd; }
button { display: flex; align-items: center; justify-content: center; padding: 0; border: 0; background: none; color: inherit; font: inherit; white-space: nowrap; }
svg { display: block; flex: none; overflow: visible; }
.caret { flex: none; width: 0; height: 0; border: 3px solid transparent; border-top-color: #666; border-bottom: 0; }
.caret.dark { border-top-color: #111; }
.caret.dim { border-top-color: #888; }
.off .caret { border-top-color: #aaa; }

.titlebar { display: flex; align-items: center; height: 29px; background: linear-gradient(90deg, #88969a 0, #a4abad 50px, #b4b4b4 80px, #c4c4c4 200px, #b4b4b4 300px, #c3c3c3 420px, #bbb); }
.logo { margin: 0 4px 2px 1px; }
.bar { width: 2px; height: 19px; border-left: 1px solid #888; border-right: 1px solid #eee; }
.quick { display: flex; align-items: center; margin: 0 0 0 2px; }
.quick button { width: 25px; height: 24px; gap: 4px; }
.quick button:first-child { width: 28px; }
.quick .menu { width: 37px; justify-content: flex-start; padding-left: 4px; }
.more { width: 17px; }
.more .caret { border-width: 4px; border-bottom: 0; }
.titlebar h1 { flex: 1; height: 27px; margin: 0; font-size: 14px; font-weight: 400; line-height: 26px; text-align: center; white-space: nowrap; color: #280000; background: linear-gradient(#ff2222, #ee0c0c 40%, #d90000 80%, #e20000); border: 1px solid #c80000; border-radius: 1px; }
.window { display: flex; align-self: flex-start; margin: 0 2px; height: 24px; border: 1px solid #555; border-top: 0; border-radius: 0 0 6px 6px; overflow: hidden; box-shadow: 0 0 0 1px #ddd; }
.window button { width: 34px; background: linear-gradient(#cfcfcf, #b0b0b0 45%, #878787 50%, #b8b8b8); border-right: 1px solid #666; }
.window .shut { width: 60px; border: 0; background: linear-gradient(#e09a8f, #cc6552 45%, #b02c18 50%, #dc7462); }

.tabs { display: flex; align-items: flex-end; height: 31px; background: linear-gradient(#c0c0c0, #e0e0e0 55%, #ececec); border-bottom: 1px solid #8b949e; color: #444; }
.tabs > button { height: 30px; padding: 0 14px; }
.tabs .file { width: 70px; margin-right: 4px; color: #fff; border: 1px solid #a53413; border-bottom: 0; border-radius: 3px 3px 0 0; background: radial-gradient(ellipse at 50% 110%, #fca551, #e85325 65%, #da4723); box-shadow: inset 0 0 1px #ffb291; }
.tabs .current { width: 74px; padding: 0; margin-bottom: -1px; height: 31px; background: #fff; border: 1px solid #9aa1a8; border-bottom: 0; border-radius: 3px 3px 0 0; }
.help { display: flex; align-items: center; gap: 12px; height: 30px; margin-left: auto; padding-right: 4px; }

.ribbon { display: flex; height: 105px; background: linear-gradient(#fff, #fbfbfc 60%, #e7eaee); border-bottom: 1px solid #8b9097; }
.group { display: flex; flex-direction: column; flex: none; border-right: 1px solid #b7bec8; box-shadow: inset -1px 0 #f8f8fa; }
.group > .body { display: flex; flex: 1; padding-top: 5px; }
.group footer { display: flex; align-items: center; height: 19px; padding: 0 4px 0 2px; color: #6d7482; white-space: nowrap; }
.group footer.plain { padding: 0 0 0 2px; }
.group footer span { flex: 1; text-align: center; }
.group footer:not(.plain) span { padding-right: 10px; }
.clip { width: 116px; }
.slides { width: 173px; }
.font { width: 269px; }
.para { width: 216px; }
.draw { width: 376px; }
.edit { width: 106px; }
.big { flex-direction: column; justify-content: flex-start; height: 80px; }
.big .pic { display: grid; place-items: center; height: 36px; margin-bottom: 8px; }
.big > .caret { margin-top: 6px; }
.inline { display: flex; align-items: center; gap: 6px; }
.off { color: #a1a1a1; }
.stack { display: flex; flex-direction: column; align-items: flex-start; margin-top: -3px; }
.stack button { height: 26px; gap: 6px; }
.ico { display: flex; justify-content: center; width: 17px; }
.clip .big { width: 76px; }
.clip .stack button { min-width: 16px; margin-left: -4px; }
.slides .big { width: 60px; }
.slides .stack { padding-left: 2px; }
.slides .stack button { height: 27px; gap: 5px; }
.rows { display: flex; flex-direction: column; padding: 6px 0 0 4px; }
.group > .body.rows { padding-top: 11px; }
.row { display: flex; align-items: center; height: 27px; margin-bottom: 8px; }
.para .rows { width: 180px; }
.w28 { width: 28px; height: 24px; }
.w38 { width: 37px; height: 24px; gap: 7px; }
.w41 { width: 41px; height: 24px; gap: 9px; }
.rule { width: 1px; height: 20px; margin: 0 2px; background: #bbbfc6; }
.combo { position: relative; display: flex; height: 27px; }
.combo select { width: 100%; padding: 0 3px; appearance: none; border: 1px solid #dfe3e7; border-radius: 0; background: #fafafa; color: #888; font: inherit; opacity: 1; }
.combo .caret { position: absolute; right: 5px; top: 12px; }
.face { width: 126px; }
.points { width: 45px; }
.letters { font: 15px/18px "Liberation Serif", serif; color: #6b6b6b; }
.letters .w38 { gap: 4px; color: #707070; }
.letters s { font: bold 12px/16px "Liberation Serif", serif; }
.letters b { font-size: 14px; }
.letters .tint { font-size: 17px; color: #888; }
.shade { text-shadow: 2px 2px 2px #aaa; }
.draw .big:nth-child(1) { width: 58px; }
.draw .big:nth-child(2) { width: 76px; }
.draw .big:nth-child(3) { width: 103px; }
.draw .stack { padding-left: 2px; }
.draw .stack button, .edit .stack button { gap: 4px; }
.edit .stack { padding-left: 9px; }

main { display: flex; flex: 1; min-height: 0; padding-top: 3px; border-top: 1px solid #a9adb3; background: linear-gradient(#d0d3d7, #b9bcc1); }
aside { flex: none; width: 201px; border-right: 1px solid #878c94; }
.panes { display: flex; height: 26px; border-top: 1px solid #8c9299; }
.panes button { width: 29px; background: linear-gradient(#cbd0d4, #b6bcc1); border-left: 1px solid #8b9299; border-bottom: 1px solid #8b9299; }
.panes button:nth-child(2) { width: 86px; justify-content: flex-start; padding-left: 6px; }
.panes .on { flex: 1; justify-content: flex-start; padding-left: 6px; background: linear-gradient(#e1e4e8, #d0d3d7); border: 0; }
ol { display: flex; flex-direction: column; gap: 4px; margin: 0; padding: 4px 7px 0 3px; list-style: none; }
li { display: flex; align-items: flex-start; height: 130px; padding: 3px; border: 1px solid transparent; border-radius: 3px; }
li.selected { border-color: #c29326; background: linear-gradient(#fedd78, #fecf61 40%, #fff582); }
li strong { flex: 1; padding-left: 2px; font: bold 13px/16px "DejaVu Sans", sans-serif; margin-top: 4px; color: #444b57; }
.thumb { width: 162px; height: 122px; background: #fff; box-shadow: 0 0 0 1px #8e9299, 0 1px 5px #555; text-rendering: geometricPrecision; }
.verse { font: bold 4px "Liberation Serif", serif; fill: #000; stroke: #000; stroke-width: .3; }
.mini { font: 4px "Liberation Serif", serif; fill: #001; stroke: #001; stroke-width: .1; }
.mini-head { font-weight: bold; }
.mini path { stroke: #333; stroke-width: 1.5; }
.mini.faint { font-size: 3px; fill: #444; stroke: none; }
.mini.faint path { stroke: #bbb; stroke-width: 1; }
.work { display: flex; flex: 1; flex-direction: column; min-width: 0; background: #eceef0; border-left: 3px solid #eceef0; }
.canvas { display: flex; flex: 1; align-items: flex-start; justify-content: center; background: linear-gradient(#d0d3d7, #bbbec3); border-left: 1px solid #8a8f96; border-bottom: 1px solid #8a8f96; }
.slide { flex: none; width: 650px; height: 487px; margin: 12px auto; padding: 188px 32px 0; background: #fff; box-shadow: 0 0 0 1px #9da5b0, 2px 3px 9px #555; font-family: "Liberation Serif", serif; color: #000; }
.slide h2 { margin: 0 0 13px; padding-left: 112px; font-size: 16px; line-height: 20px; white-space: pre; }
table { width: 406px; border-collapse: collapse; table-layout: fixed; font-size: 14px; line-height: 17px; }
th, td { height: 20px; padding: 1px 4px; border: 1px solid #000; text-align: left; font-weight: 400; vertical-align: top; white-space: nowrap; }
th:nth-child(1) { width: 147px; }
th:nth-child(2) { width: 74px; }
th:nth-child(3) { width: 62px; }
tr:last-child td { height: 26px; }
.scroll { display: flex; flex: none; flex-direction: column; align-items: center; align-self: stretch; width: 20px; background: #dde2e9; }
.scroll .up, .scroll .down { width: 12px; height: 24px; }
.up::after, .down::after { content: ""; border: 6px solid transparent; border-top-width: 0; border-bottom-color: #555; }
.down::after { border-top: 6px solid #555; border-bottom-width: 0; }
.track { flex: 1; align-self: stretch; padding-top: 149px; }
.thumbbar { height: 112px; border: 1px solid #8b939d; border-radius: 1px; background: linear-gradient(90deg, #f8f9fa, #d1d5da); }
.jump { height: 20px; }
.jump.first { align-self: stretch; height: 22px; border-top: 1px solid #aab; }
.canvas .scroll { padding-bottom: 18px; }
.notes { display: flex; height: 39px; margin-top: 4px; background: #fff; border: 1px solid #8a8f96; border-width: 1px 0 0 1px; }
.notes p { flex: 1; margin: 0; padding-left: 12px; font: 19px/38px "Noto Sans", sans-serif; color: #000; }
.notes .scroll .up, .notes .scroll .down { height: 19px; }

.status { display: flex; height: 27px; background: linear-gradient(#eceef0, #c9ccd1 60%, #bbbfc4); color: #444b55; border-top: 1px solid #8a919b; border-bottom: 1px solid #4a5a66; }
.status > span { display: flex; align-items: center; padding: 0 12px 0 8px; border-right: 1px solid #92979e; }
.status > .lang { width: 162px; gap: 15px; }
.viewer { display: flex; align-items: center; gap: 1px; margin-left: auto; padding: 0 4px 0 0; border-left: 1px solid #92979e; }
.viewer button { width: 22px; height: 24px; }
.viewer .on { border: 1px solid #c49132; border-radius: 2px; background: linear-gradient(#ffe69a, #fdd05c); }
.viewer output { width: 38px; text-align: center; }
.viewer .round { width: 20px; height: 20px; border: 1px solid #7a8089; border-radius: 50%; background: #f6f7f8; }
.viewer button:last-child { margin-left: 7px; }
input[type="range"] { width: 123px; height: 18px; margin: 0; appearance: none; background: linear-gradient(#888, #888) 50% 5px / 1px 8px no-repeat, linear-gradient(#90969d, #90969d) 0 9px / 100% 1px no-repeat; }
input[type="range"]::-webkit-slider-thumb { appearance: none; width: 11px; height: 16px; border: 1px solid #686e76; border-radius: 1px 1px 6px 6px; background: #f5f5f6; }

.taskbar { display: flex; height: 48px; background: linear-gradient(100deg, #29746f 0, #277673 10%, #3a9090 17%, #2d7880 24%, #4b999c 31%, #32779a 36%, #38758f 42%, #629999 45%, #4a8796 51%, #3b7592 58%, #326b83 66%, #245a76 76%, #1e5878 87%, #215e7e); }
.taskbar > button { flex: none; width: 66px; margin-right: 4px; }
.taskbar .alice, .taskbar .media { width: 71px; }
.taskbar .open { border: 1px solid #cfe0e4; border-radius: 2px; background: linear-gradient(#b8d0d5aa, #7fa9b755 50%, #65a6b4aa); box-shadow: inset 0 0 0 1px #28424b44, 0 0 0 1px #16343e; }
.taskbar .word { width: 59px; margin-right: 11px; box-shadow: 3px 0 0 -1px #3d858d, 4px 0 0 -1px #b8cdd0, 7px 0 0 -1px #3d858d, 8px 0 0 -1px #b8cdd0; }
.taskbar .power { background: linear-gradient(#dae2e5cc, #8babb9aa 50%, #b4ccd3cc); }
.tray { display: flex; align-items: center; margin-left: auto; color: #f6fafb; }
.tray button { width: 30px; height: 30px; }
.locale { width: 33px; font-size: 13px; }
.tray time { width: 102px; font-size: 14px; line-height: 22px; text-align: center; }
.tray .desktop { width: 14px; height: 46px; border: 1px solid #7d9aaa; background: linear-gradient(#5e879d, #1d4e6a 50%, #2c6786); }
</style>
